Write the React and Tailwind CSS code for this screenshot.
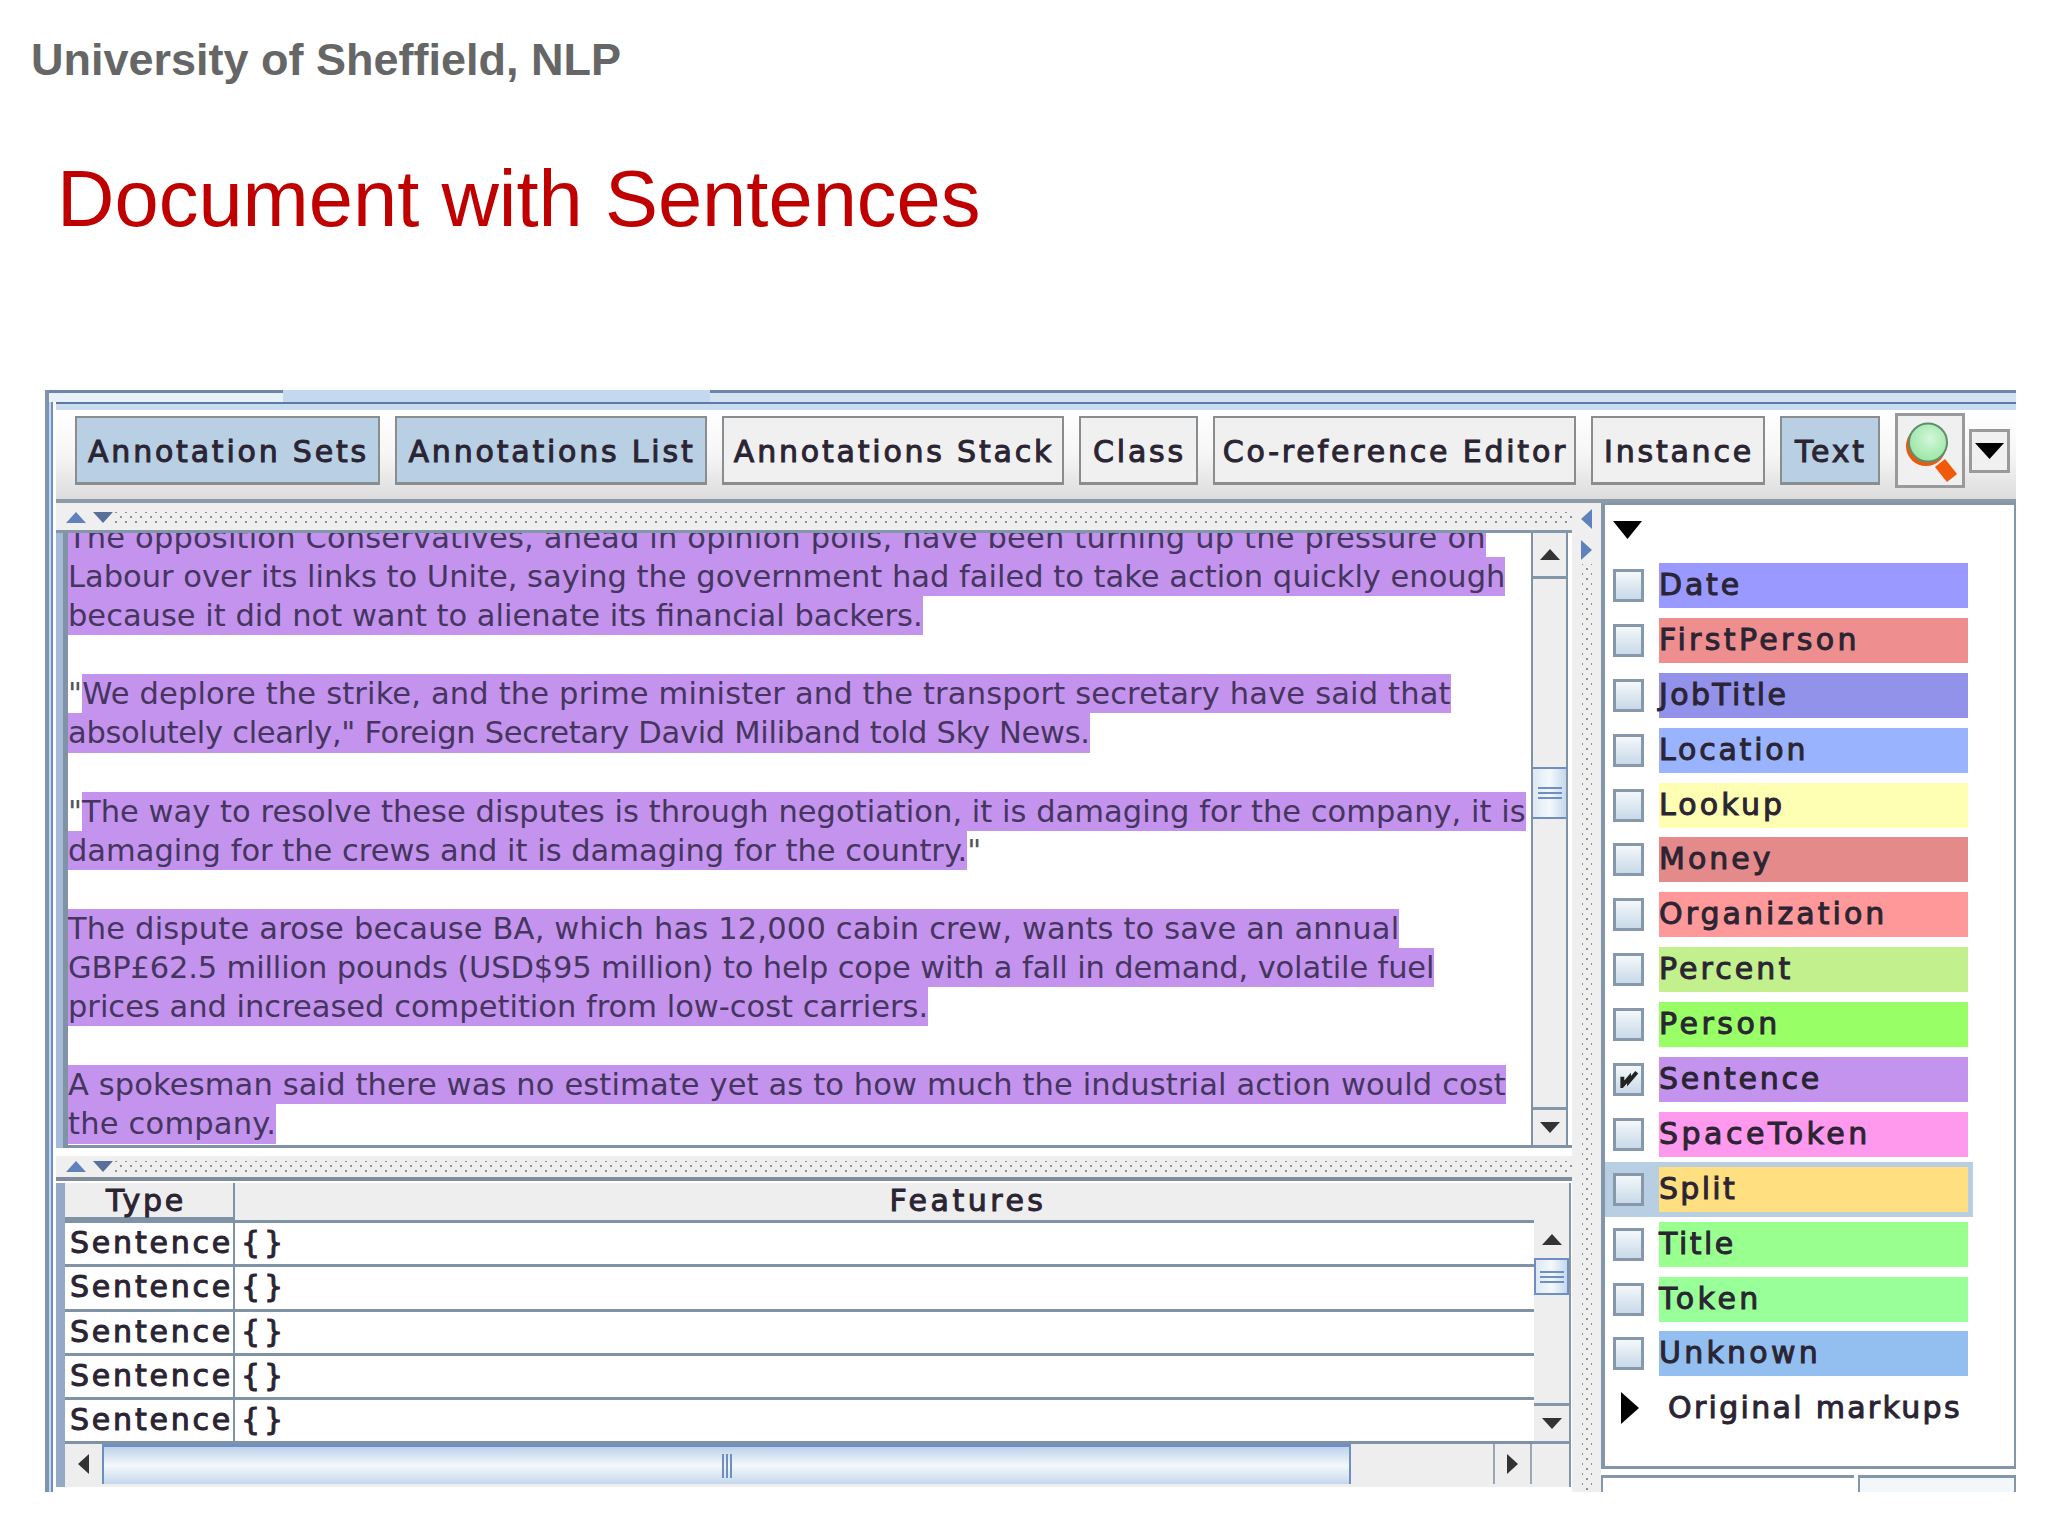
const font = "font-['DejaVu_Sans',sans-serif]"

const tabs = [
  { label: 'Annotation Sets', w: 'w-[305px]', on: true },
  { label: 'Annotations List', w: 'w-[312px]', on: true },
  { label: 'Annotations Stack', w: 'w-[342px]', ls: 'tracking-[2.6px]' },
  { label: 'Class', w: 'w-[119px]' },
  { label: 'Co-reference Editor', w: 'w-[363px]', ls: 'tracking-[2.1px]' },
  { label: 'Instance', w: 'w-[174px]' },
  { label: 'Text', w: 'w-[100px]', on: true },
]

// text pane, one entry per visual line; "pre" / "post" sit outside the highlight
const lines = [
  { hl: 'The opposition Conservatives, ahead in opinion polls, have been turning up the pressure on', ls: 'tracking-[0.17px]' },
  { hl: 'Labour over its links to Unite, saying the government had failed to take action quickly enough' },
  { hl: 'because it did not want to alienate its financial backers.' },
  {},
  { pre: '"', hl: 'We deplore the strike, and the prime minister and the transport secretary have said that', ls: 'tracking-[0.16px]' },
  { hl: 'absolutely clearly," Foreign Secretary David Miliband told Sky News.', ls: 'tracking-[-0.29px]' },
  {},
  { pre: '"', hl: 'The way to resolve these disputes is through negotiation, it is damaging for the company, it is', ls: 'tracking-[0.03px]' },
  { hl: 'damaging for the crews and it is damaging for the country.', post: '"' },
  {},
  { hl: 'The dispute arose because BA, which has 12,000 cabin crew, wants to save an annual', ls: 'tracking-[0.17px]' },
  { hl: 'GBP£62.5 million pounds (USD$95 million) to help cope with a fall in demand, volatile fuel', ls: 'tracking-[-0.15px]' },
  { hl: 'prices and increased competition from low-cost carriers.' },
  {},
  { hl: 'A spokesman said there was no estimate yet as to how much the industrial action would cost', ls: 'tracking-[0.13px]' },
  { hl: 'the company.', ls: 'tracking-[0.2px]' },
]

const annotationTypes = [
  { name: 'Date', bg: 'bg-[#9999ff]', ls: 'tracking-[2.8px]' },
  { name: 'FirstPerson', bg: 'bg-[#ee8e8e]', ls: 'tracking-[3.35px]' },
  { name: 'JobTitle', bg: 'bg-[#9292ea]', ls: 'tracking-[2.35px]' },
  { name: 'Location', bg: 'bg-[#99b3ff]', ls: 'tracking-[2.8px]' },
  { name: 'Lookup', bg: 'bg-[#ffffb3]', ls: 'tracking-[3.15px]' },
  { name: 'Money', bg: 'bg-[#e58a8a]', ls: 'tracking-[3px]' },
  { name: 'Organization', bg: 'bg-[#ff9999]', ls: 'tracking-[3.05px]' },
  { name: 'Percent', bg: 'bg-[#c2f08c]', ls: 'tracking-[3.05px]' },
  { name: 'Person', bg: 'bg-[#99ff66]', ls: 'tracking-[3.5px]' },
  { name: 'Sentence', bg: 'bg-[#c493ed]', ls: 'tracking-[2.8px]', checked: true },
  { name: 'SpaceToken', bg: 'bg-[#ff99ee]', ls: 'tracking-[3.5px]' },
  { name: 'Split', bg: 'bg-[#ffdf80]', ls: 'tracking-[2.3px]', selected: true },
  { name: 'Title', bg: 'bg-[#99ff8f]', ls: 'tracking-[2.5px]' },
  { name: 'Token', bg: 'bg-[#99ff99]', ls: 'tracking-[3.5px]' },
  { name: 'Unknown', bg: 'bg-[#93bff0]', ls: 'tracking-[3.25px]' },
]

const dots =
  'bg-[radial-gradient(circle,#8d9298_1px,transparent_1.4px),radial-gradient(circle,#8d9298_1px,transparent_1.4px)] bg-[length:10px_10px] bg-[position:0_0,5px_5px]'
const labelInk = 'text-[30px] tracking-[2.8px] text-[#2b2433] [-webkit-text-stroke:1px_#2b2433]'

function Tri({ dir = 'up', className = '', fill = '#333' }) {
  const pts = {
    up: '0,10 7,0 14,10',
    down: '0,0 14,0 7,10',
    left: '10,0 10,14 0,7',
    right: '0,0 10,7 0,14',
  }[dir]
  const box = dir === 'up' || dir === 'down' ? '0 0 14 10' : '0 0 10 14'
  return (
    <svg viewBox={box} preserveAspectRatio="none" className={className}>
      <polygon points={pts} fill={fill} />
    </svg>
  )
}

function Thumb({ className = '' }) {
  return (
    <div className={`flex flex-col items-center justify-center gap-[3px] border-y-2 border-[#6f8fc0] bg-gradient-to-r from-[#dce8f4] via-[#f4f8fc] to-[#c4d8ec] ${className}`}>
      <div className="h-[2px] w-[24px] bg-[#6f8fc0]" />
      <div className="h-[2px] w-[24px] bg-[#6f8fc0]" />
      <div className="h-[2px] w-[24px] bg-[#6f8fc0]" />
    </div>
  )
}

function SplitBar({ className = '' }) {
  return (
    <div className={`flex items-center bg-[#efeff0] ${className}`}>
      <div className={`flex h-[12px] w-full items-center ${dots}`}>
        <div className="flex items-center gap-[7px] bg-[#efeff0] pl-[10px] pr-[2px]">
          <Tri dir="up" fill="#5f82bb" className="h-[11px] w-[20px]" />
          <Tri dir="down" fill="#5a6f99" className="h-[11px] w-[20px]" />
        </div>
      </div>
    </div>
  )
}

function TextPane() {
  return (
    <div className="flex h-[615px] border-b-[3px] border-[#7f92a6] bg-white">
      <div className={`h-full w-[1463px] overflow-hidden text-[#45365f] ${font} text-[30.5px] leading-[39px]`}>
        <div className="-mt-[15px]">
          {lines.map((l, i) => (
            <div key={i} className={`h-[39.1px] whitespace-pre ${l.ls || ''}`}>
              {l.pre && <span className="text-[#555]">{l.pre}</span>}
              {l.hl && <span className="inline-block h-[39.1px] bg-[#c493ed]">{l.hl}</span>}
              {l.post && <span className="text-[#555]">{l.post}</span>}
            </div>
          ))}
        </div>
      </div>
      <div className="flex w-[37px] flex-col border-x-2 border-[#7f92a6] bg-[#eeeeef]">
        <div className="flex h-[46px] shrink-0 items-center justify-center border-b-[3px] border-[#8497aa]">
          <Tri dir="up" className="h-[11px] w-[20px]" />
        </div>
        <div className="h-[188px]" />
        <Thumb className="h-[52px]" />
        <div className="grow" />
        <div className="flex h-[38px] items-center justify-center border-t-[3px] border-[#8497aa]">
          <Tri dir="down" className="h-[11px] w-[20px]" />
        </div>
      </div>
    </div>
  )
}

function Table() {
  return (
    <div className={`mt-[2px] flex border-l-[9px] border-[#93a9c6] ${font} ${labelInk}`}>
      <div className="w-[1506px] border-r-2 border-[#8497aa]">
        <div className="flex h-[37px] bg-[#eeeeef] leading-[35px]">
          <div className="w-[170px] border-r-2 border-b-[3px] border-[#7f92a6] pr-[6px] text-center">Type</div>
          <div className="grow pl-[132px] text-center tracking-[3.5px]">Features</div>
        </div>
        <div className="flex">
          <div className="w-[1469px] border-t-[3px] border-[#7f92a6] bg-white">
            {[0, 1, 2, 3, 4].map(i => (
              <div key={i} className="flex h-[44.3px] border-b-[3px] border-[#7f92a6] leading-[40px]">
                <div className="w-[170px] overflow-hidden whitespace-nowrap border-r-2 border-[#7f92a6] pl-[5px]">Sentence</div>
                <div className="pl-[6px] tracking-[4px]">{'{}'}</div>
              </div>
            ))}
          </div>
          <div className="flex w-[35px] flex-col bg-[#eeeeef]">
            <div className="flex h-[38px] shrink-0 items-center justify-center">
              <Tri dir="up" className="h-[11px] w-[20px]" />
            </div>
            <Thumb className="h-[37px] shrink-0 border-x-2" />
            <div className="grow" />
            <div className="flex h-[41px] items-center justify-center border-y-[3px] border-[#8497aa]">
              <Tri dir="down" className="h-[11px] w-[20px]" />
            </div>
          </div>
        </div>
        <div className="flex h-[43px] bg-[#eeeeef] pb-[3px]">
          <div className="flex w-[37px] items-center justify-center">
            <Tri dir="left" className="h-[20px] w-[11px]" />
          </div>
          <div className="flex w-[1249px] items-center justify-center border-x-2 border-t-[3px] border-[#6f8fc0] bg-gradient-to-b from-[#bcd2ea] via-[#f4f8fc] to-[#c4d8ec]">
            <div className="flex gap-[2px]">
              <div className="h-[24px] w-[2px] bg-[#6f8fc0]" />
              <div className="h-[24px] w-[2px] bg-[#6f8fc0]" />
              <div className="h-[24px] w-[2px] bg-[#6f8fc0]" />
            </div>
          </div>
          <div className="w-[144px] border-r-2 border-[#9aa6b2]" />
          <div className="flex w-[37px] items-center justify-center border-r-2 border-[#9aa6b2]">
            <Tri dir="right" className="h-[20px] w-[11px]" />
          </div>
        </div>
      </div>
    </div>
  )
}

function AnnotationList() {
  return (
    <div className={`flex h-[966px] flex-col border-t-2 border-r-2 border-b-[3px] border-l-[4px] border-[#8497aa] bg-white ${font} ${labelInk}`}>
      <div className="h-[53px] shrink-0 pl-[8px] pt-[16px]">
        <Tri dir="down" fill="#000" className="h-[18px] w-[29px]" />
      </div>
      {annotationTypes.map(t => (
        <div key={t.name} className={`flex h-[54.9px] shrink-0 items-center pl-[8px] ${t.selected ? 'w-[368px] bg-[#b8cfe3]' : ''}`}>
          <div className="flex h-[33px] w-[31px] items-center justify-center border-[3px] border-[#8698aa] bg-gradient-to-b from-[#f4f8fb] to-[#c8d9e8]">
            {t.checked && (
              <svg viewBox="0 0 18 16" className="h-[18px] w-[20px]">
                <path d="M3 6 V14 L9 7 V10 L16 2" fill="none" stroke="#222" strokeWidth="3.5" />
              </svg>
            )}
          </div>
          <div className={`ml-[15px] h-[45px] w-[309px] leading-[44px] ${t.ls} ${t.bg}`}>{t.name}</div>
        </div>
      ))}
      <div className="mt-[4px] flex items-center pl-[16px]">
        <Tri dir="right" fill="#000" className="h-[32px] w-[18px]" />
        <span className="ml-[29px] whitespace-nowrap tracking-[2.3px]">Original markups</span>
      </div>
    </div>
  )
}

export default function App() {
  return (
    <div className="h-[1536px] w-[2048px] overflow-hidden bg-white font-['Liberation_Sans',sans-serif]">
      <div className="pl-[31px] pt-[33px] text-[45px] font-bold leading-[53px] text-[#666666]">University of Sheffield, NLP</div>
      <h1 className="pl-[57px] pt-[68px] text-[79.5px] leading-[90px] text-[#c00000]">Document with Sentences</h1>

      <div className="ml-[45px] mt-[146px] flex h-[1102px] w-[1971px] flex-col overflow-hidden border-l-[4px] border-[#7e93ad]">
        {/* tab strip of the outer tabbed pane */}
        <div className="flex h-[12px] shrink-0">
          <div className="w-[234px] border-t-[3px] border-[#6f86ab] bg-[#e8f0f8]" />
          <div className="w-[427px] bg-[#c4d9ef]" />
          <div className="grow border-t-[3px] border-[#6f86ab] bg-[#d4e3f2]" />
        </div>
        <div className="flex grow border-l-[2px] border-[#c4d9ef]">
          <div className="flex grow flex-col border-l-[2px] border-[#6f8fc0] pl-[3px]">
            <div className="h-[8px] shrink-0 border-t-[2px] border-[#5f7aa5] bg-[#c8dcf0]" />
            {/* toolbar */}
            <div className="flex h-[93px] shrink-0 items-center gap-[15px] border-b-[4px] border-[#8d9aa8] bg-gradient-to-b from-white via-[#f6f6f6] to-[#dcdcdc] pb-[8px] pl-[19px]">
              {tabs.map(t => (
                <div
                  key={t.label}
                  className={`flex h-[69px] shrink-0 items-center justify-center whitespace-nowrap border-2 border-b-[3px] border-[#8a8d90] pt-[3px] pl-[2px] ${t.w} ${t.on ? 'bg-[#b8cfe4]' : 'bg-[#f0f0f0]'} ${font} ${labelInk} ${t.ls || ''}`}
                >
                  {t.label}
                </div>
              ))}
              <div className="flex h-[75px] w-[70px] shrink-0 items-center justify-center border-[3px] border-[#9a9a9a] bg-[#f0f0f0]">
                <svg viewBox="0 0 64 69" className="h-[69px] w-[64px]">
                  <defs>
                    <radialGradient id="lens" cx="0.55" cy="0.4" r="0.6">
                      <stop offset="0" stopColor="#d4f6da" />
                      <stop offset="1" stopColor="#9be6a6" />
                    </radialGradient>
                  </defs>
                  <line x1="42" y1="47" x2="54" y2="62" stroke="#f05a0a" strokeWidth="13" />
                  <circle cx="28" cy="30" r="20" fill="#e85a10" />
                  <circle cx="30" cy="26.5" r="19" fill="url(#lens)" stroke="#5f8f6a" strokeWidth="2" />
                </svg>
              </div>
              <div className="-ml-[11px] flex h-[44px] w-[41px] shrink-0 items-center justify-center border-[3px] border-[#9a9a9a] bg-[#f0f0f0]">
                <Tri dir="down" fill="#000" className="h-[16px] w-[29px]" />
              </div>
            </div>

            <div className="flex grow">
              {/* document + annotation table */}
              <div className="flex w-[1516px] shrink-0 flex-col">
                <SplitBar className="h-[30px] shrink-0 border-b-[3px] border-[#8497aa] pt-[2px]" />
                <div className="border-l-[7px] border-[#a3bbd8]">
                  <div className="border-l-[5px] border-[#7f92a6]">
                    <TextPane />
                  </div>
                </div>
                <div className="h-[8px] shrink-0 bg-white" />
                <SplitBar className="h-[25px] shrink-0 border-b-[4px] border-[#7f8c99]" />
                <Table />
              </div>
              {/* vertical divider */}
              <div className="flex w-[29px] shrink-0 flex-col items-center bg-[#efeff0] pt-[6px]">
                <Tri dir="left" fill="#5f82bb" className="h-[20px] w-[11px]" />
                <Tri dir="right" fill="#5f82bb" className="mt-[11px] h-[20px] w-[11px]" />
                <div className={`mt-[4px] w-[10px] grow ${dots}`} />
              </div>
              <div className="flex grow flex-col">
                <AnnotationList />
                <div className="mt-[6px] flex grow gap-[4px]">
                  <div className="w-[253px] border-l-2 border-t-[3px] border-[#8497aa] bg-white" />
                  <div className="grow border-x-2 border-t-[3px] border-[#8497aa] bg-[#f4f7fa]" />
                </div>
              </div>
            </div>
          </div>
        </div>
      </div>
    </div>
  )
}
